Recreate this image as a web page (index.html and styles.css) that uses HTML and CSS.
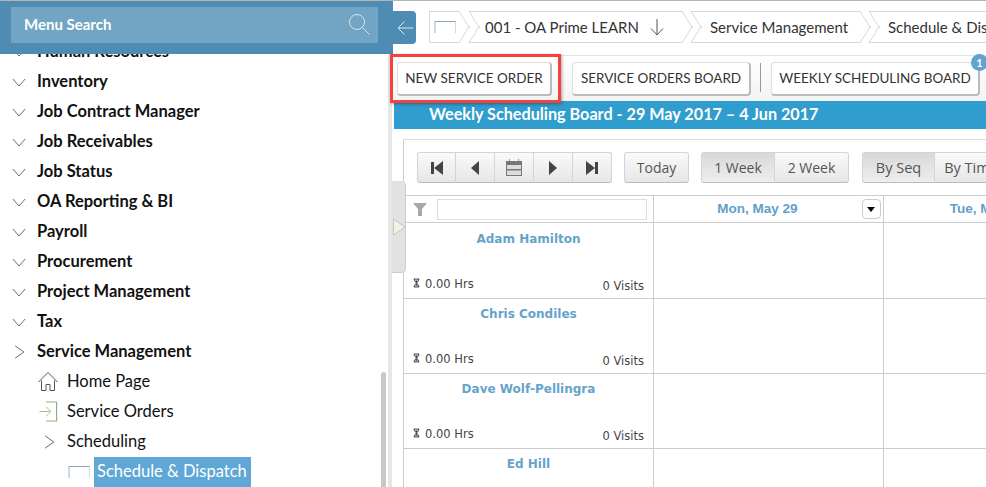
FILE: index.html
```html
<!DOCTYPE html>
<html>
<head>
    <meta charset="UTF-8">
    <meta name="viewport" content="width=device-width, initial-scale=1.0">
    <title>Weekly Scheduling Board</title>
    <link rel="stylesheet" href="styles.css">
</head>
<body>
    <svg class="defs" width="0" height="0">
        <symbol id="down" viewBox="0 0 16 10"><path d="M1 1l7 8 7-8" fill="none" stroke="#555" stroke-width="1"/></symbol>
        <symbol id="right" viewBox="0 0 12 16"><path d="M1 1l10 7-10 7" fill="none" stroke="#555" stroke-width="1"/></symbol>
        <symbol id="glass" viewBox="0 0 8 10"><path d="M1 .5h6M1 9.500h6M1.500 .5v1.500l5 6v1.500M6.500 .5v1.500l-5 6v1.500" fill="none" stroke="#222" stroke-width="1"/><path d="M2.500 2h3L4 4zM2.500 8L4 6l1.500 2z" fill="#222"/></symbol>
    </svg>
    <div class="app">
        <aside class="sidebar">
            <div class="side-head">
                <div class="search">
                    <span>Menu Search</span>
                    <svg width="24" height="24" viewBox="0 0 24 24"><circle cx="10" cy="10" r="7.500" fill="none" stroke="#d5e4ee" stroke-width="1"/><path d="M15.500 15.500l7 7" stroke="#d5e4ee" stroke-width="1"/></svg>
                </div>
            </div>
            <div class="menu">
                <div class="item first"><svg class="caret"><use href="#down"/></svg>Human Resources</div>
                <div class="item"><svg class="caret"><use href="#down"/></svg>Inventory</div>
                <div class="item"><svg class="caret"><use href="#down"/></svg>Job Contract Manager</div>
                <div class="item"><svg class="caret"><use href="#down"/></svg>Job Receivables</div>
                <div class="item"><svg class="caret"><use href="#down"/></svg>Job Status</div>
                <div class="item"><svg class="caret"><use href="#down"/></svg>OA Reporting &amp; BI</div>
                <div class="item"><svg class="caret"><use href="#down"/></svg>Payroll</div>
                <div class="item"><svg class="caret"><use href="#down"/></svg>Procurement</div>
                <div class="item"><svg class="caret"><use href="#down"/></svg>Project Management</div>
                <div class="item"><svg class="caret"><use href="#down"/></svg>Tax</div>
                <div class="item"><svg class="caret-r"><use href="#right"/></svg>Service Management</div>
                <div class="sub">
                    <svg class="sub-icon" viewBox="0 0 20 20"><path d="M0.500 10.500L10 1l9.500 9.500M3.500 9v10h4.500v-6h4v6h4.500V9" fill="none" stroke="#555" stroke-width="1"/></svg>
                    Home Page
                </div>
                <div class="sub">
                    <svg class="sub-icon" viewBox="0 0 20 22"><path d="M8 1h11v20H8" fill="none" stroke="#8fb07a" stroke-width="1.200"/><path d="M1 11h11M8 6l5 5-5 5" fill="none" stroke="#9fc08c" stroke-width="1"/></svg>
                    Service Orders
                </div>
                <div class="sub">
                    <svg class="sub-caret"><use href="#right"/></svg>
                    Scheduling
                </div>
                <div class="leaf">
                    <span class="win"></span>
                    <span class="picked">Schedule &amp; Dispatch</span>
                </div>
                <div class="thumb"></div>
            </div>
        </aside>
        <main class="main">
            <div class="topbar">
                <button class="back">
                    <svg width="18" height="16" viewBox="0 0 18 16"><path d="M17 8H2M8.500 1.500L2 8l6.500 6.500" fill="none" stroke="#dce8f0" stroke-width="1"/></svg>
                </button>
                <div class="crumbs">
                    <div class="crumb crumb-home"><span class="win"></span></div>
                    <div class="crumb crumb-co">001 - OA Prime LEARN
                        <svg width="14" height="18" viewBox="0 0 14 18"><path d="M7 1v16M1 10.500L7 17l6-6.500" fill="none" stroke="#555" stroke-width="1"/></svg>
                    </div>
                    <div class="crumb crumb-sm">Service Management</div>
                    <div class="crumb crumb-sd">Schedule &amp; Dispatch</div>
                </div>
            </div>
            <div class="toolbar">
                <button class="tool tool-new">NEW SERVICE ORDER<span class="callout"></span></button>
                <button class="tool tool-orders">SERVICE ORDERS BOARD</button>
                <span class="divider"></span>
                <button class="tool tool-weekly">WEEKLY SCHEDULING BOARD<span class="badge">1</span></button>
            </div>
            <div class="title">Weekly Scheduling Board - 29 May 2017 – 4 Jun 2017</div>
            <div class="board">
                <div class="controls">
                    <div class="group nav">
                        <button><svg width="12" height="14" viewBox="0 0 12 14"><path d="M0 1h3v12H0zM12 0v14L3 7z" fill="#444"/></svg></button>
                        <button><svg width="8" height="14" viewBox="0 0 8 14"><path d="M8 0v14L0 7z" fill="#444"/></svg></button>
                        <button><svg width="16" height="17" viewBox="0 0 16 17"><path d="M3 0h1v2H3zM12 0h1v2h-1z" fill="#999"/><path d="M0 2h16v15H0z" fill="#777"/><path d="M1 6h14v4H1zM1 11.500h14V16H1z" fill="#ddd"/></svg></button>
                        <button><svg width="8" height="14" viewBox="0 0 8 14"><path d="M0 0v14l8-7z" fill="#444"/></svg></button>
                        <button><svg width="12" height="14" viewBox="0 0 12 14"><path d="M9 1h3v12H9zM0 0v14l9-7z" fill="#444"/></svg></button>
                    </div>
                    <button class="today">Today</button>
                    <div class="group weeks">
                        <button class="on">1 Week</button>
                        <button>2 Week</button>
                    </div>
                    <div class="group sort">
                        <button class="on">By Seq</button>
                        <button>By Time</button>
                    </div>
                </div>
                <div class="grid">
                    <div class="cell head filter">
                        <svg width="14" height="14" viewBox="0 0 14 14"><path d="M0 1h14L9 7v7H5V7z" fill="#a8a8a8"/></svg>
                        <input type="text" class="filter-box">
                    </div>
                    <div class="cell head day">Mon, May 29<span class="drop"></span></div>
                    <div class="cell head day">Tue, May 30</div>

                    <div class="cell tech tech-first">
                        <div class="name">Adam Hamilton</div>
                        <div class="stats"><span><svg class="glass"><use href="#glass"/></svg>0.00 Hrs</span><span class="visits">0 Visits</span></div>
                    </div>
                    <div class="cell"></div>
                    <div class="cell"></div>

                    <div class="cell tech">
                        <div class="name">Chris Condiles</div>
                        <div class="stats"><span><svg class="glass"><use href="#glass"/></svg>0.00 Hrs</span><span class="visits">0 Visits</span></div>
                    </div>
                    <div class="cell"></div>
                    <div class="cell"></div>

                    <div class="cell tech">
                        <div class="name">Dave Wolf-Pellingra</div>
                        <div class="stats"><span><svg class="glass"><use href="#glass"/></svg>0.00 Hrs</span><span class="visits">0 Visits</span></div>
                    </div>
                    <div class="cell"></div>
                    <div class="cell"></div>

                    <div class="cell tech">
                        <div class="name">Ed Hill</div>
                    </div>
                    <div class="cell"></div>
                    <div class="cell"></div>
                </div>
            </div>
            <div class="collapse">
                <svg width="13" height="18" viewBox="0 0 13 18"><path d="M.5 1l11.500 8L.5 17z" fill="#f1f2e6" stroke="#c4c4c4" stroke-width="1"/></svg>
            </div>
        </main>
    </div>
</body>
</html>
```

FILE: styles.css
```css
* {
    box-sizing: border-box;
}
html, body {
    height: 100%;
}
body {
    margin: 0;
    overflow: hidden;
    font-family: Lato, Arial, sans-serif;
    background-color: #fff;
    color: #222;
}
button {
    font: inherit;
    color: inherit;
    cursor: pointer;
}
.defs {
    position: absolute;
}
.app {
    display: flex;
    height: 487px;
    overflow: hidden;
    border-top: 1px solid #b4b4b4;
}

/* left menu */
.sidebar {
    width: 393px;
    flex: none;
    display: flex;
    flex-direction: column;
}
.side-head {
    height: 53px;
    flex: none;
    padding: 6px 15px 0 11px;
    background-color: #4f8cb3;
}
.search {
    height: 36px;
    padding: 0 7px 2px 13px;
    display: flex;
    align-items: center;
    justify-content: space-between;
    background-color: #72a4c4;
    color: #fff;
    font-weight: 700;
    font-size: 15px;
}
.menu {
    flex: 1;
    position: relative;
    overflow: hidden;
    margin-right: 1px;
    background-color: #fff;
    border-right: 4px solid #e6e6e6;
}
.item {
    height: 30px;
    padding-left: 12px;
    display: flex;
    align-items: center;
    font-size: 16.500px;
    font-weight: 700;
    color: #111;
}
.item.first {
    margin-top: -18px;
}
.caret {
    width: 14px;
    height: 9px;
    margin-right: 11px;
    margin-top: 2px;
}
.caret-r {
    width: 11px;
    height: 14px;
    margin: 2px 12px 0 2px;
}
.sub {
    height: 30px;
    padding-left: 38px;
    display: flex;
    align-items: center;
    font-size: 16.500px;
    color: #111;
}
.sub-icon {
    width: 20px;
    height: 21px;
    margin-right: 9px;
}
.sub-caret {
    width: 11px;
    height: 14px;
    margin: 2px 12px 0 6px;
}
.leaf {
    height: 30px;
    margin-top: 1px;
    padding-left: 68px;
    display: flex;
    align-items: center;
    font-size: 16.500px;
}
.win {
    display: block;
    width: 22px;
    height: 12px;
    border: 2px solid #c8dbe9;
    border-top: 1px solid #8fa3b5;
    border-bottom: 0;
    border-right-width: 1px;
}
.leaf .win {
    margin-right: 4px;
}
.picked {
    height: 30px;
    padding: 0 4px 0 3px;
    line-height: 29px;
    background-color: #5ea7d6;
    color: #fff;
}
.thumb {
    position: absolute;
    right: 2px;
    bottom: 0;
    width: 5px;
    height: 115px;
    border-radius: 3px 3px 0 0;
    background-color: #c8c8c8;
}

/* main side */
.main {
    flex: 1;
    min-width: 0;
    position: relative;
}
.topbar {
    height: 54px;
    padding-top: 10px;
    display: flex;
    align-items: flex-start;
}
.back {
    width: 23px;
    height: 33px;
    flex: none;
    padding: 0;
    border: 0;
    border-radius: 0 4px 4px 0;
    background-color: #4f8cb3;
    display: flex;
    align-items: center;
    justify-content: center;
}
.crumbs {
    display: flex;
    margin-left: 13px;
    font-size: 15px;
    color: #333;
    white-space: nowrap;
}
.crumb {
    position: relative;
    height: 32px;
    flex: none;
    display: flex;
    align-items: center;
    padding-left: 9px;
}
.crumb::before,
.crumb::after {
    content: "";
    position: absolute;
    left: 0;
    right: 0;
    height: 50%;
    border: 1px solid #d8d8d8;
    z-index: -1;
}
.crumb::before {
    top: 0;
    border-bottom: 0;
    transform-origin: bottom;
    transform: skewX(32deg);
}
.crumb::after {
    bottom: 0;
    border-top: 0;
    transform-origin: top;
    transform: skewX(-32deg);
}
.crumb-home {
    width: 41px;
    padding-left: 4px;
    border-left: 1px solid #d8d8d8;
    clip-path: inset(0 -20px 0 0);
    margin-right: 9px;
}
.crumb-home::before,
.crumb-home::after {
    left: -20px;
    border-left: 0;
}
.crumb-co {
    width: 214px;
    padding-left: 6px;
    margin-right: 8px;
}
.crumb-co svg {
    margin-left: 11px;
}
.crumb-sm {
    width: 170px;
    margin-right: 8px;
}
.crumb-sd {
    width: 170px;
}

.toolbar {
    height: 46px;
    padding: 6px 0 0 4px;
    display: flex;
    align-items: flex-start;
    border-top: 1px solid #e4e4e4;
    background: linear-gradient(#fff, #f3f3f3);
    font-size: 13.500px;
}
.tool {
    position: relative;
    height: 34px;
    padding: 0 0 2px;
    flex: none;
    border: 1px solid #ddd;
    border-right: 2px solid #bbb;
    border-bottom: 2px solid #bbb;
    border-radius: 4px;
    background-color: #fff;
    color: #333;
    white-space: nowrap;
}
.tool-new {
    width: 155px;
    margin-right: 20px;
}
.tool-orders {
    width: 179px;
    margin-right: 9px;
}
.tool-weekly {
    width: 209px;
    margin-left: 10px;
}
.divider {
    width: 1px;
    height: 29px;
    margin-top: 1px;
    flex: none;
    background-color: #999;
}
.callout {
    position: absolute;
    left: -8px;
    right: -11px;
    top: -9px;
    bottom: -9px;
    border: 3px solid #f5413f;
    box-shadow: 1px 1px 3px rgba(0, 0, 0, .35);
}
.badge {
    position: absolute;
    right: -10px;
    top: -9px;
    width: 17px;
    height: 17px;
    border-radius: 50%;
    background-color: #60a3cf;
    color: #fff;
    font-size: 11px;
    font-weight: 700;
    line-height: 17px;
    text-align: center;
}
.title {
    height: 28px;
    margin-left: 1px;
    padding-left: 35px;
    background-color: #2f9dce;
    color: #fff;
    font-size: 16.200px;
    font-weight: 700;
    line-height: 26px;
    white-space: nowrap;
}

/* board */
.board {
    width: 700px;
    margin: 10px 0 0 10px;
    border-top: 1px solid #ddd;
    border-left: 1px solid #ccc;
}
.controls {
    height: 55px;
    padding: 12px 0 0 13px;
    display: flex;
    align-items: flex-start;
    font-family: "Open Sans", Arial, sans-serif;
    font-size: 14px;
    color: #555;
}
.group {
    display: flex;
}
.group button,
.today {
    height: 31px;
    padding: 0;
    flex: none;
    border: 1px solid #d4d4d4;
    border-left-width: 0;
    border-bottom-color: #bbb;
    background: linear-gradient(#fafafa, #e6e6e6);
    display: flex;
    align-items: center;
    justify-content: center;
}
.group button:first-child {
    border-left-width: 1px;
    border-radius: 3px 0 0 3px;
}
.group button:last-child {
    border-radius: 0 3px 3px 0;
}
.today {
    border-left-width: 1px;
    border-radius: 3px;
    width: 65px;
    margin: 0 12px;
}
.nav button {
    width: 39px;
}
.weeks button {
    width: 74px;
}
.weeks {
    margin-right: 13px;
}
.sort {
    font-size: 14.500px;
}
.sort button {
    width: 73px;
}
.group button.on {
    background: linear-gradient(#d8d8d8, #eee);
}

.grid {
    display: grid;
    grid-template-columns: 250px 230px 230px;
    grid-template-rows: 27px 76px;
    grid-auto-rows: 75px;
    border-top: 1px solid #ccc;
}
.cell {
    border-right: 1px solid #ccc;
    border-bottom: 1px solid #ccc;
}
.head {
    position: relative;
}
.filter {
    display: flex;
    align-items: center;
    padding-left: 9px;
}
.filter-box {
    width: 210px;
    height: 21px;
    margin-left: 10px;
    border: 1px solid #ddd;
    outline: 0;
}
.day {
    padding-right: 22px;
    font-family: "Liberation Sans", Arial, sans-serif;
    font-size: 13.500px;
    font-weight: 700;
    color: #5f9fc9;
    text-align: center;
    line-height: 26px;
    white-space: nowrap;
}
.drop {
    position: absolute;
    right: 2px;
    top: 3px;
    width: 19px;
    height: 20px;
    border: 1px solid #ccc;
    border-radius: 4px;
    background-color: #fff;
}
.drop::after {
    content: "";
    position: absolute;
    left: 4px;
    top: 7px;
    border-top: 5px solid #000;
    border-left: 4.500px solid transparent;
    border-right: 4.500px solid transparent;
}
.tech {
    padding: 8px 9px 0 9px;
    font-family: "DejaVu Sans", Verdana, sans-serif;
}
.tech-first {
    padding-top: 9px;
}
.name {
    font-size: 12px;
    font-weight: 700;
    color: #65a3cb;
    text-align: center;
}
.stats {
    margin-top: 31px;
    display: flex;
    justify-content: space-between;
    font-size: 11.500px;
    color: #444;
}
.glass {
    width: 7px;
    height: 10px;
    margin-right: 5px;
}
.visits {
    margin-top: 2px;
}
.collapse {
    position: absolute;
    left: -1px;
    top: 180px;
    width: 14px;
    height: 92px;
    padding: 37px 0 0 1px;
    border-radius: 0 5px 5px 0;
    background-color: #e2e2e2;
    border-right: 1px solid #ccc;
    border-bottom: 1px solid #ccc;
}
```
